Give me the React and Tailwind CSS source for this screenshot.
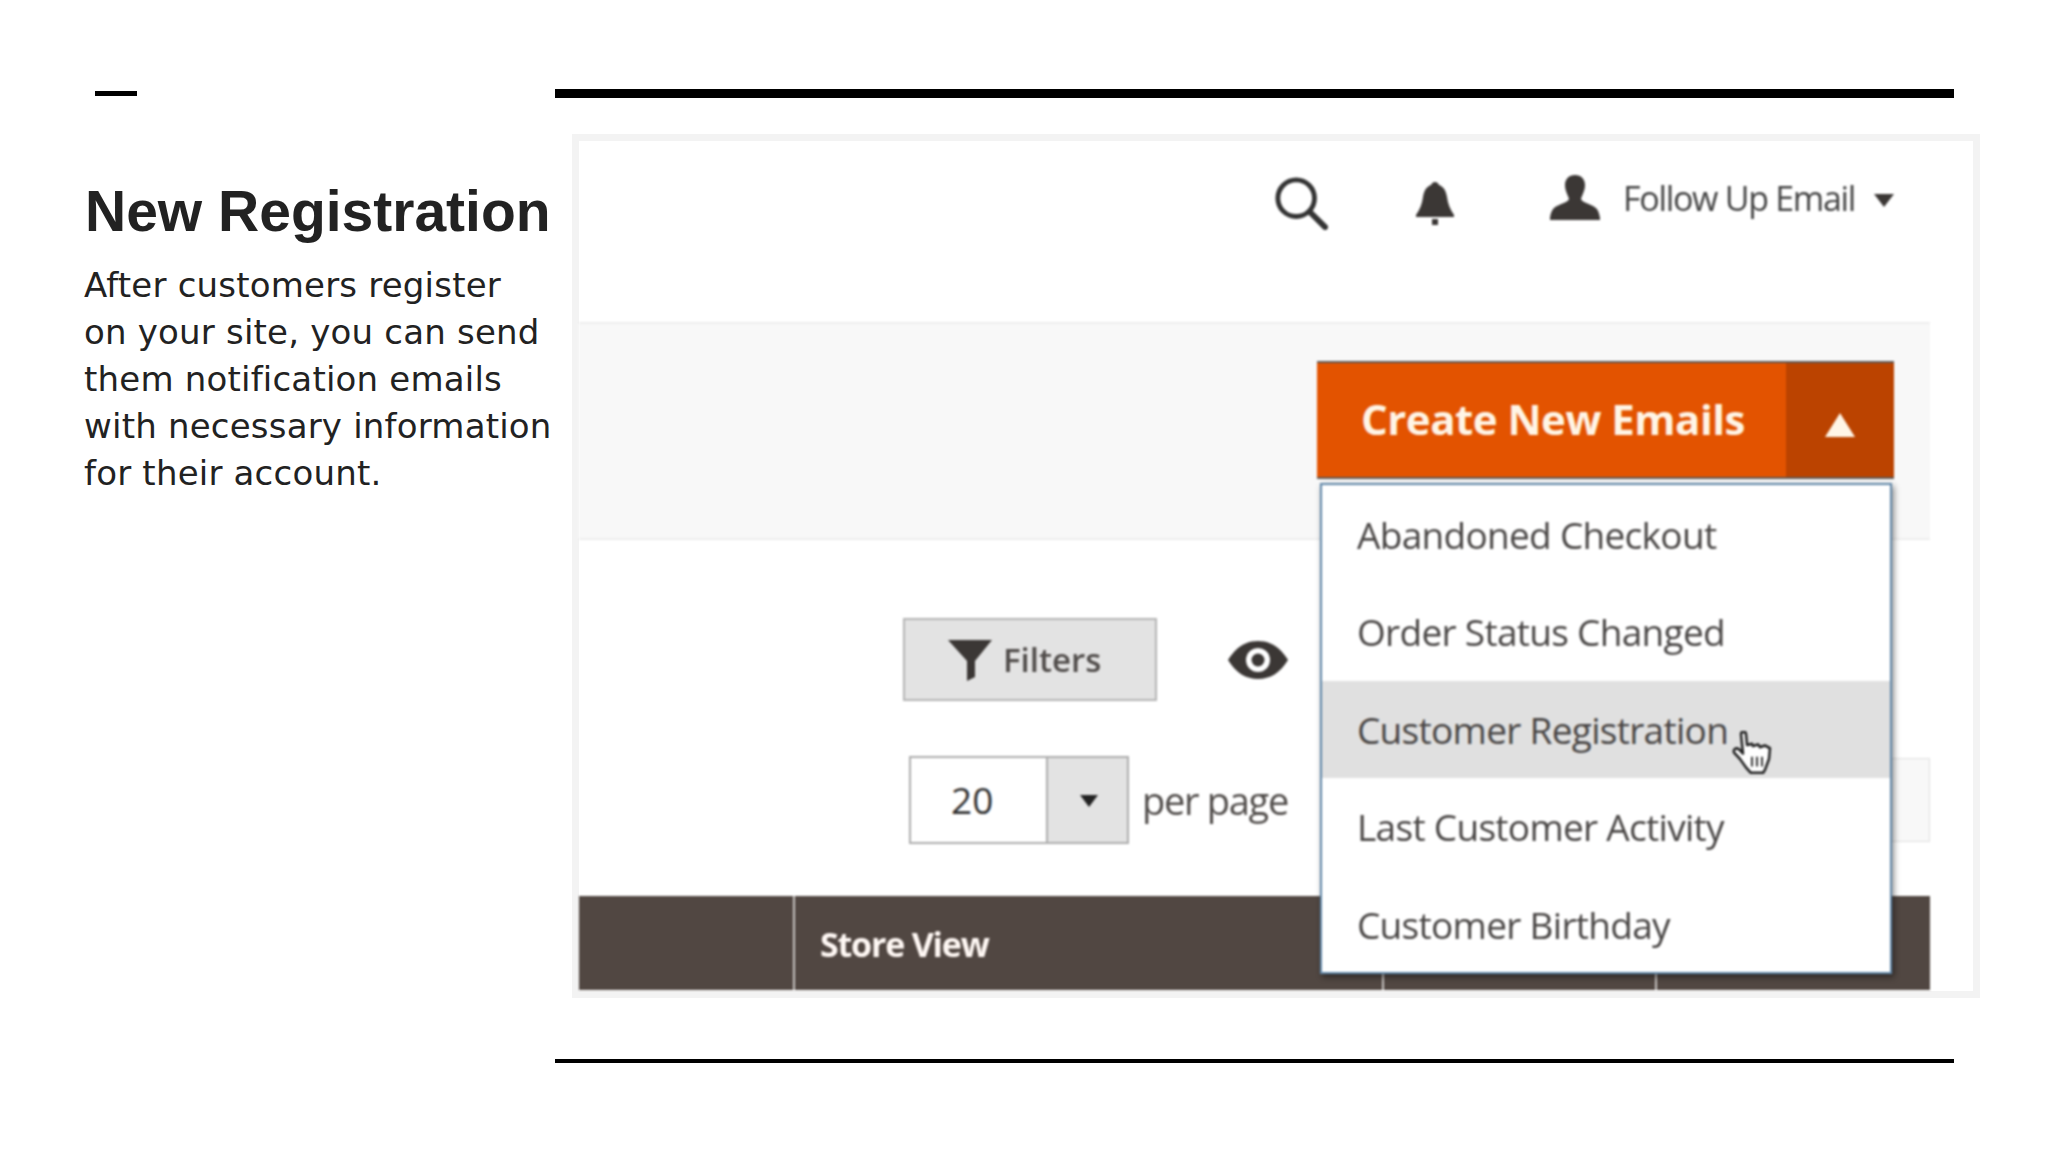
import React from "react";

const UI = "font-['Open_Sans',sans-serif]";
const items = [
  ["Abandoned Checkout", false],
  ["Order Status Changed", false],
  ["Customer Registration", true],
  ["Last Customer Activity", false],
  ["Customer Birthday", false],
];

function Search() {
  return (
    <svg width="54" height="54" viewBox="0 0 56 56" fill="none" stroke="#333" strokeWidth="5">
      <circle cx="23" cy="23" r="19" />
      <path d="M37 37 L53 53" strokeWidth="6" strokeLinecap="round" />
    </svg>
  );
}
function Bell() {
  return (
    <svg width="38" height="43" viewBox="0 0 38 43" fill="#3b3735">
      <path d="M19 0c2 0 3 1 4 3c5 2 7 6 8 12c1 7 3 12 7 18v2H0v-2c4-6 6-11 7-18c1-6 3-10 8-12c1-2 2-3 4-3z" />
      <rect x="16" y="37" width="6" height="6" />
    </svg>
  );
}
function User() {
  return (
    <svg width="50" height="45" viewBox="0 0 50 45" fill="#3b3735">
      <path d="M25 0c6 0 10 4 10 10c0 6-3 10-4 14c1 3 6 4 12 7c4 2 6 5 7 12v2H0v-2c1-7 3-10 7-12c6-3 11-4 12-7c-1-4-4-8-4-14c0-6 4-10 10-10z" />
    </svg>
  );
}
function Funnel() {
  return (
    <svg width="46" height="42" viewBox="0 0 46 42" fill="#3b3735">
      <path d="M1 1h44L28 22v16l-8 4V22z" />
    </svg>
  );
}
function Eye() {
  return (
    <svg width="62" height="40" viewBox="0 0 62 40">
      <path d="M1 20C9 7 19 1 31 1s22 6 30 19c-8 13-18 19-30 19S9 33 1 20z" fill="#3b3735" />
      <circle cx="31" cy="20" r="12" fill="#fff" />
      <circle cx="31" cy="20" r="6.500" fill="#3b3735" />
    </svg>
  );
}
function Hand() {
  return (
    <svg width="40" height="43" viewBox="0 0 40 40" preserveAspectRatio="none" fill="#fff" stroke="#222" strokeWidth="2.500" strokeLinejoin="round">
      <path d="M9 3C9 0 14 0 14 3L15 13L20 12L21 14L26 12.500L28 15L33 13.500L38 16L37 26L33 36L31 39L19 39L14 34L8 26L2 20C1 17 4 15 7 17L11 21Z" />
      <path d="M20 24V33M25 24V33M30 24V33" fill="none" strokeWidth="1.800" />
    </svg>
  );
}
function Caret({ w, h, up, color }) {
  return (
    <svg width={w} height={h} viewBox="0 0 20 14" preserveAspectRatio="none" fill={color}>
      <path d={up ? "M10 0L20 14H0z" : "M0 0h20L10 14z"} />
    </svg>
  );
}

export default function App() {
  return (
    <div className="w-[2048px] h-[1152px] bg-white flex overflow-hidden">
      <div className="w-[555px] shrink-0 pl-[85px]">
        <div className="ml-[10px] mt-[91px] w-[42px] h-[5px] bg-black" />
        <h1 className="mt-[81px] font-['Liberation_Sans',sans-serif] font-bold text-[57px] leading-[68px] text-[#222] whitespace-nowrap">
          New Registration
        </h1>
        <p className="mt-[17px] -ml-px font-['DejaVu_Sans',sans-serif] text-[34px] leading-[47px] tracking-[0.2px] text-[#222] whitespace-nowrap">
          After customers register<br />
          on your site, you can send<br />
          them notification emails<br />
          with necessary information<br />
          for their account.
        </p>
      </div>

      <div className="w-[1399px] shrink-0">
        <div className="mt-[89px] h-[9px] bg-black" />
        <div className="mt-[36px] ml-[17px] w-[1408px] h-[864px] border-[7px] border-[#f3f3f3] bg-white">
          <div className={`relative h-full blur-[0.8px] ${UI}`}>
            {/* top bar */}
            <div className="h-[181px] flex items-start">
              <div className="ml-[695px] mt-[35px]"><Search /></div>
              <div className="ml-[88px] mt-[41px]"><Bell /></div>
              <div className="ml-[96px] mt-[34px]"><User /></div>
              <div className="ml-[23px] mt-[33px] text-[34px] leading-[48px] tracking-[-1.3px] text-[#444] whitespace-nowrap">Follow Up Email</div>
              <div className="ml-[19px] mt-[53px]"><Caret w={20} h={13} color="#3b3735" /></div>
            </div>
            {/* action band */}
            <div className="w-[1351px] h-[218px] bg-[#f8f8f8] border-y-2 border-[#eeeeee] flex justify-end pt-[37px] pr-[36px]">
              <div className="w-[577px] h-[118px] flex border-t-2 border-b-2 border-[#5f5a58] bg-[#e35300]">
                <div className="w-[469px] pl-[44px] pb-[4px] flex items-center text-[42px] font-bold tracking-[-0.5px] text-[#fff5e6] whitespace-nowrap">
                  Create New Emails
                </div>
                <div className="flex-1 bg-[#bb4300] flex items-center justify-center pt-[10px]">
                  <Caret w={30} h={24} up color="#fff5e6" />
                </div>
              </div>
            </div>
            {/* filters row */}
            <div className="h-[356px] w-[1351px] pt-[78px]">
              <div className="ml-[324px] flex items-center h-[83px]">
                <div className="w-[254px] h-[83px] border-2 border-[#b5b5b5] bg-[#e3e3e3] flex items-center pl-[42px] gap-[10px]">
                  <Funnel />
                  <span className="text-[33px] font-semibold text-[#514d4b]">Filters</span>
                </div>
                <div className="ml-[70px]"><Eye /></div>
              </div>
              <div className="mt-[55px] flex items-center h-[88px]">
                <div className="ml-[330px] w-[220px] h-[88px] border-2 border-[#adadad] flex">
                  <div className="w-[135px] bg-white flex items-center pl-[40px] text-[37px] text-[#333]">20</div>
                  <div className="flex-1 bg-[#e3e3e3] border-l-2 border-[#adadad] flex items-center justify-center pl-[2px] pt-[2px]">
                    <Caret w={18} h={12} color="#222" />
                  </div>
                </div>
                <span className="ml-[13px] text-[38px] tracking-[-1.3px] text-[#514d4b] whitespace-nowrap">per page</span>
                <div className="ml-auto w-[200px] h-[84px] border border-[#e0e0e0] bg-[#f8f8f8]" />
              </div>
            </div>
            {/* table head */}
            <div className="w-[1351px] h-[94px] bg-[#514742] flex text-white">
              <div className="w-[216px] border-r-2 border-[#c8c4c2]" />
              <div className="w-[589px] border-r-2 border-[#c8c4c2] pl-[25px] pt-[3px] flex items-center text-[34px] font-bold tracking-[-1.2px] text-[#fff8f4]">Store View</div>
              <div className="w-[273px] border-r-2 border-[#c8c4c2]" />
            </div>
            {/* dropdown */}
            <div className="absolute left-[741px] top-[342px] w-[572px] h-[491px] bg-white border-2 border-[#5f86a8] shadow-[2px_3px_6px_rgba(0,0,0,0.45)] flex flex-col pt-[1px]">
              {items.map(([t, on]) => (
                <div key={t} className={`relative shrink-0 h-[97.4px] pl-[35px] flex items-center text-[37px] tracking-[-0.7px] text-[#4a4746] whitespace-nowrap ${on ? "bg-[#e0e0e0]" : ""}`}>
                  {t}
                  {on && (
                    <div className="absolute left-[410px] top-[50px]"><Hand /></div>
                  )}
                </div>
              ))}
            </div>
          </div>
        </div>
        <div className="mt-[61px] h-[4px] bg-black" />
      </div>
    </div>
  );
}
